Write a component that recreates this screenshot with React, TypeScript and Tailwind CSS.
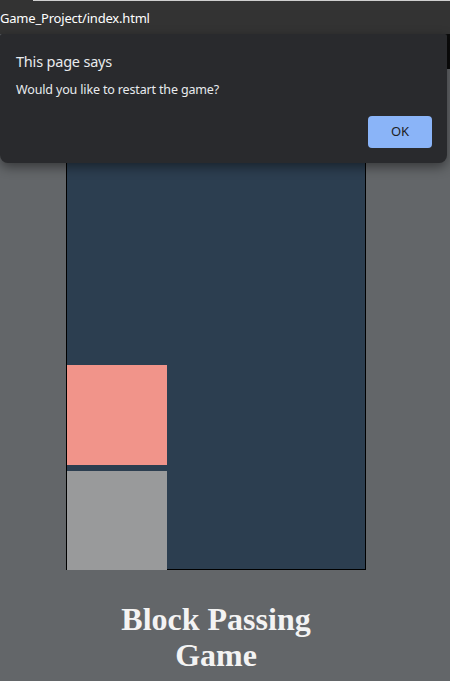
import React from "react";

export default function App() {
  return (
    <div className="relative w-[450px] h-[681px] overflow-hidden bg-[#636669]">
      {/* browser strip on top */}
      <div className="relative h-[34px] bg-[#333333]">
        <div className="absolute left-[33px] right-0 top-0 h-px bg-[#cfcfcf]" />
        <div className="pt-[10px] text-[13px] leading-[17px] text-white font-['Noto_Sans',sans-serif] tracking-[-0.2px]">
          Game_Project/index.html
        </div>
      </div>

      {/* page */}
      <div className="w-[432px] flex flex-col items-center">
        <div className="w-[300px] h-[536px] bg-[#2c3e50] border-l border-r border-b border-black flex flex-col justify-end">
          <div className="w-[100px] h-[100px] bg-[#f1948a]" />
          <div className="h-[6px]" />
          <div className="w-[100px] h-[99px] bg-[#999a9b] -mb-px" />
        </div>
        <h1 className="mt-[31px] w-[240px] text-center text-[32px] leading-[36px] font-bold text-[#f3f3f3] font-['Liberation_Serif',serif]">
          Block Passing Game
        </h1>
      </div>

      {/* alert dialog */}
      <div className="absolute right-0 top-[34px] w-[5px] h-[35px] bg-[#0c0c0c]" />
      <div className="absolute left-0 top-[34px] w-[447px] h-[129px] bg-[#292a2d] rounded-t-[2px] rounded-b-[8px] shadow-[0_4px_12px_rgba(0,0,0,0.45)] font-['Noto_Sans',sans-serif]">
        <div className="pl-4 pt-[16px] text-[14.5px] leading-[22px] text-[#e8eaed] tracking-[-0.2px]">
          This page says
        </div>
        <div className="pl-4 pt-[9px] text-[12.5px] leading-[18px] text-[#e8eaed] tracking-[-0.15px]">
          Would you like to restart the game?
        </div>
        <div className="flex justify-end pr-[15px] pt-[17px]">
          <div className="w-[64px] h-[32px] rounded-[4px] bg-[#8ab4f8] flex items-center justify-center text-[13px] text-[#202124]">
            OK
          </div>
        </div>
      </div>
    </div>
  );
}
